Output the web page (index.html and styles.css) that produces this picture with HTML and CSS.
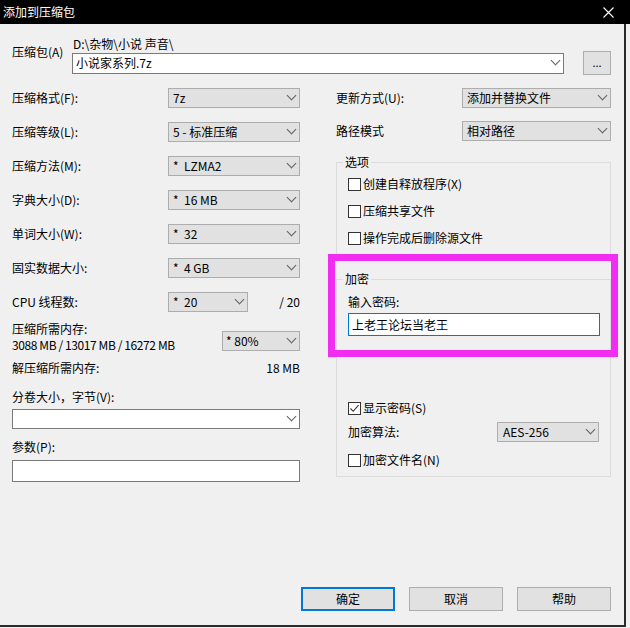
FILE: index.html
```html
<!DOCTYPE html>
<html lang="zh-CN">
<head>
    <meta charset="UTF-8">
    <title>添加到压缩包</title>
    <link rel="stylesheet" href="styles.css">
</head>
<body>
    <div class="titlebar">
        <span>添加到压缩包</span>
        <svg class="close" width="11" height="11" viewBox="0 0 11 11"><path d="M0.5 0.5 L10.5 10.5 M10.5 0.5 L0.5 10.5" stroke="#fff" stroke-width="1.1" fill="none"/></svg>
    </div>

    <div class="window">
        <div class="archive">
            <div class="archive-label">压缩包(A)</div>
            <div class="archive-field">
                <div class="path">D:\杂物\小说 声音\</div>
                <div class="combo edit">小说家系列.7z</div>
            </div>
            <div class="btn browse">...</div>
        </div>

        <div class="main">
            <div class="left">
                <div class="row"><span class="lbl">压缩格式(F):</span><div class="combo">7z</div></div>
                <div class="row"><span class="lbl">压缩等级(L):</span><div class="combo">5 - 标准压缩</div></div>
                <div class="row"><span class="lbl">压缩方法(M):</span><div class="combo">* &nbsp;LZMA2</div></div>
                <div class="row"><span class="lbl">字典大小(D):</span><div class="combo">* &nbsp;16 MB</div></div>
                <div class="row"><span class="lbl">单词大小(W):</span><div class="combo">* &nbsp;32</div></div>
                <div class="row"><span class="lbl">固实数据大小:</span><div class="combo">* &nbsp;4 GB</div></div>
                <div class="row"><span class="lbl">CPU 线程数:</span><div class="combo short">* &nbsp;20</div><span class="num">/ 20</span></div>

                <div class="mem">
                    <div>
                        <div>压缩所需内存:</div>
                        <div class="tight">3088 MB / 13017 MB / 16272 MB</div>
                    </div>
                    <div class="combo pct">* 80%</div>
                </div>
                <div class="line"><span>解压缩所需内存:</span><span class="num">18 MB</span></div>

                <div class="cap split-cap">分卷大小，字节(V):</div>
                <div class="combo edit full"></div>
                <div class="cap param-cap">参数(P):</div>
                <div class="textbox"></div>
            </div>

            <div class="right">
                <div class="row"><span class="lbl-r">更新方式(U):</span><div class="combo wide">添加并替换文件</div></div>
                <div class="row path-row"><span class="lbl-r">路径模式</span><div class="combo wide">相对路径</div></div>

                <fieldset class="group options">
                    <legend>选项</legend>
                    <div class="check"><span class="box"></span>创建自释放程序(X)</div>
                    <div class="check"><span class="box"></span>压缩共享文件</div>
                    <div class="check"><span class="box"></span>操作完成后删除源文件</div>
                </fieldset>

                <fieldset class="group crypt">
                    <legend>加密</legend>
                    <div>输入密码:</div>
                    <div class="password">上老王论坛当老王</div>
                    <div class="check show-pw"><span class="box"><svg width="11" height="11" viewBox="0 0 11 11"><path d="M1.5 5.5 L4.2 8.3 L9.5 2.2" stroke="#333" stroke-width="1.1" fill="none"/></svg></span>显示密码(S)</div>
                    <div class="row algo"><span>加密算法:</span><div class="combo algo-combo">AES-256</div></div>
                    <div class="check names"><span class="box"></span>加密文件名(N)</div>
                </fieldset>

                <div class="highlight"></div>
            </div>
        </div>

        <div class="buttons">
            <div class="btn default">确定</div>
            <div class="btn">取消</div>
            <div class="btn">帮助</div>
        </div>
    </div>
</body>
</html>
```

FILE: styles.css
```css
* {
    box-sizing: border-box;
}

body {
    margin: 0;
    width: 630px;
    height: 628px;
    overflow: hidden;
    background: #f0f0f0;
    color: #000;
    font-family: "Noto Sans CJK SC", "Noto Sans", sans-serif;
    font-size: 12px;
    line-height: 16px;
}

.titlebar {
    height: 24px;
    background: #000;
    color: #fff;
    display: flex;
    align-items: center;
    justify-content: space-between;
    padding: 0 16px 0 3px;
}

.close {
    display: block;
}

.window {
    width: 626px;
    height: 603px;
    border-right: 2px solid #2a2a2a;
    border-bottom: 2px solid #2a2a2a;
    display: flex;
    flex-direction: column;
}

/* archive name */
.archive {
    height: 64px;
    display: flex;
    padding: 12px 0 0 12px;
}

.archive-label {
    width: 60px;
    margin-top: 8px;
}

.archive-field {
    width: 492px;
}

.path {
    height: 17px;
    padding-left: 1px;
}

.archive .combo {
    width: 100%;
    height: 21px;
    padding-left: 3px;
}

.browse {
    width: 28px;
    height: 24px;
    margin: 15px 0 0 19px;
    line-height: 20px;
    font-size: 11px;
}

/* combo boxes */
.combo {
    position: relative;
    width: 132px;
    height: 20px;
    background: #e1e1e1;
    border: 1px solid #adadad;
    padding-left: 4px;
    line-height: 18px;
    white-space: nowrap;
}

.combo::after {
    content: "";
    position: absolute;
    right: 4px;
    top: 3px;
    width: 6px;
    height: 6px;
    border-right: 1px solid #606060;
    border-bottom: 1px solid #606060;
    transform: rotate(45deg);
}

.combo.edit {
    background: #fff;
    border-color: #7a7a7a;
}

.combo.short {
    width: 80px;
}

.combo.full {
    width: 288px;
    margin-top: 4px;
}

.combo.wide {
    width: 149px;
}

/* columns */
.main {
    display: flex;
    padding-left: 12px;
}

.left {
    width: 288px;
}

.right {
    width: 275px;
    margin-left: 36px;
    position: relative;
}

.row {
    display: flex;
    align-items: center;
    height: 20px;
}

.left .row + .row {
    margin-top: 14px;
}

.lbl {
    width: 156px;
}

.lbl-r {
    width: 126px;
}

.num {
    flex: 1;
    text-align: right;
}

.mem {
    display: flex;
    align-items: flex-end;
    justify-content: space-between;
    margin-top: 9px;
}

.tight {
    letter-spacing: -0.4px;
}

.combo.pct {
    width: 78px;
    margin-bottom: 2px;
    padding-left: 3px;
}

.line {
    display: flex;
    justify-content: space-between;
    margin-top: 7px;
}

.split-cap {
    margin-top: 13px;
}

.param-cap {
    margin-top: 10px;
}

.textbox {
    width: 288px;
    height: 22px;
    margin-top: 5px;
    background: #fff;
    border: 1px solid #7a7a7a;
}

/* right side */
.path-row {
    margin-top: 13px;
}

.group {
    margin: 0;
    border: 1px solid #dcdcdc;
    padding: 6px 11px 10px;
    min-width: 0;
}

.group legend {
    padding: 0 2px;
    margin-left: -5px;
    line-height: 16px;
}

.options {
    margin-top: 13px;
}

.check {
    display: flex;
    align-items: center;
    height: 16px;
}

.check + .check {
    margin-top: 11px;
}

.box {
    width: 13px;
    height: 13px;
    border: 1px solid #333;
    background: #fff;
    margin-right: 2px;
}

.box svg {
    display: block;
}

.crypt {
    margin-top: 14px;
    padding: 7px 11px 8px;
}

.password {
    width: 252px;
    height: 23px;
    margin-top: 3px;
    background: #fff;
    border: 1px solid #0078d7;
    padding-left: 3px;
    line-height: 21px;
}

.show-pw {
    margin-top: 64px;
}

.algo {
    margin-top: 6px;
    justify-content: space-between;
}

.algo-combo {
    width: 102px;
    padding-left: 5px;
}

.names {
    margin-top: 10px;
}

.highlight {
    position: absolute;
    left: -8px;
    top: 166px;
    width: 290px;
    height: 103px;
    border: 7px solid #f02df0;
}

/* buttons */
.btn {
    background: #e1e1e1;
    border: 1px solid #adadad;
    text-align: center;
}

.buttons {
    margin-top: auto;
    display: flex;
    justify-content: flex-end;
    gap: 14px;
    padding: 0 13px 14px 0;
}

.buttons .btn {
    width: 94px;
    height: 24px;
    line-height: 22px;
}

.buttons .btn.default {
    border: 2px solid #0078d7;
    line-height: 20px;
}
```
